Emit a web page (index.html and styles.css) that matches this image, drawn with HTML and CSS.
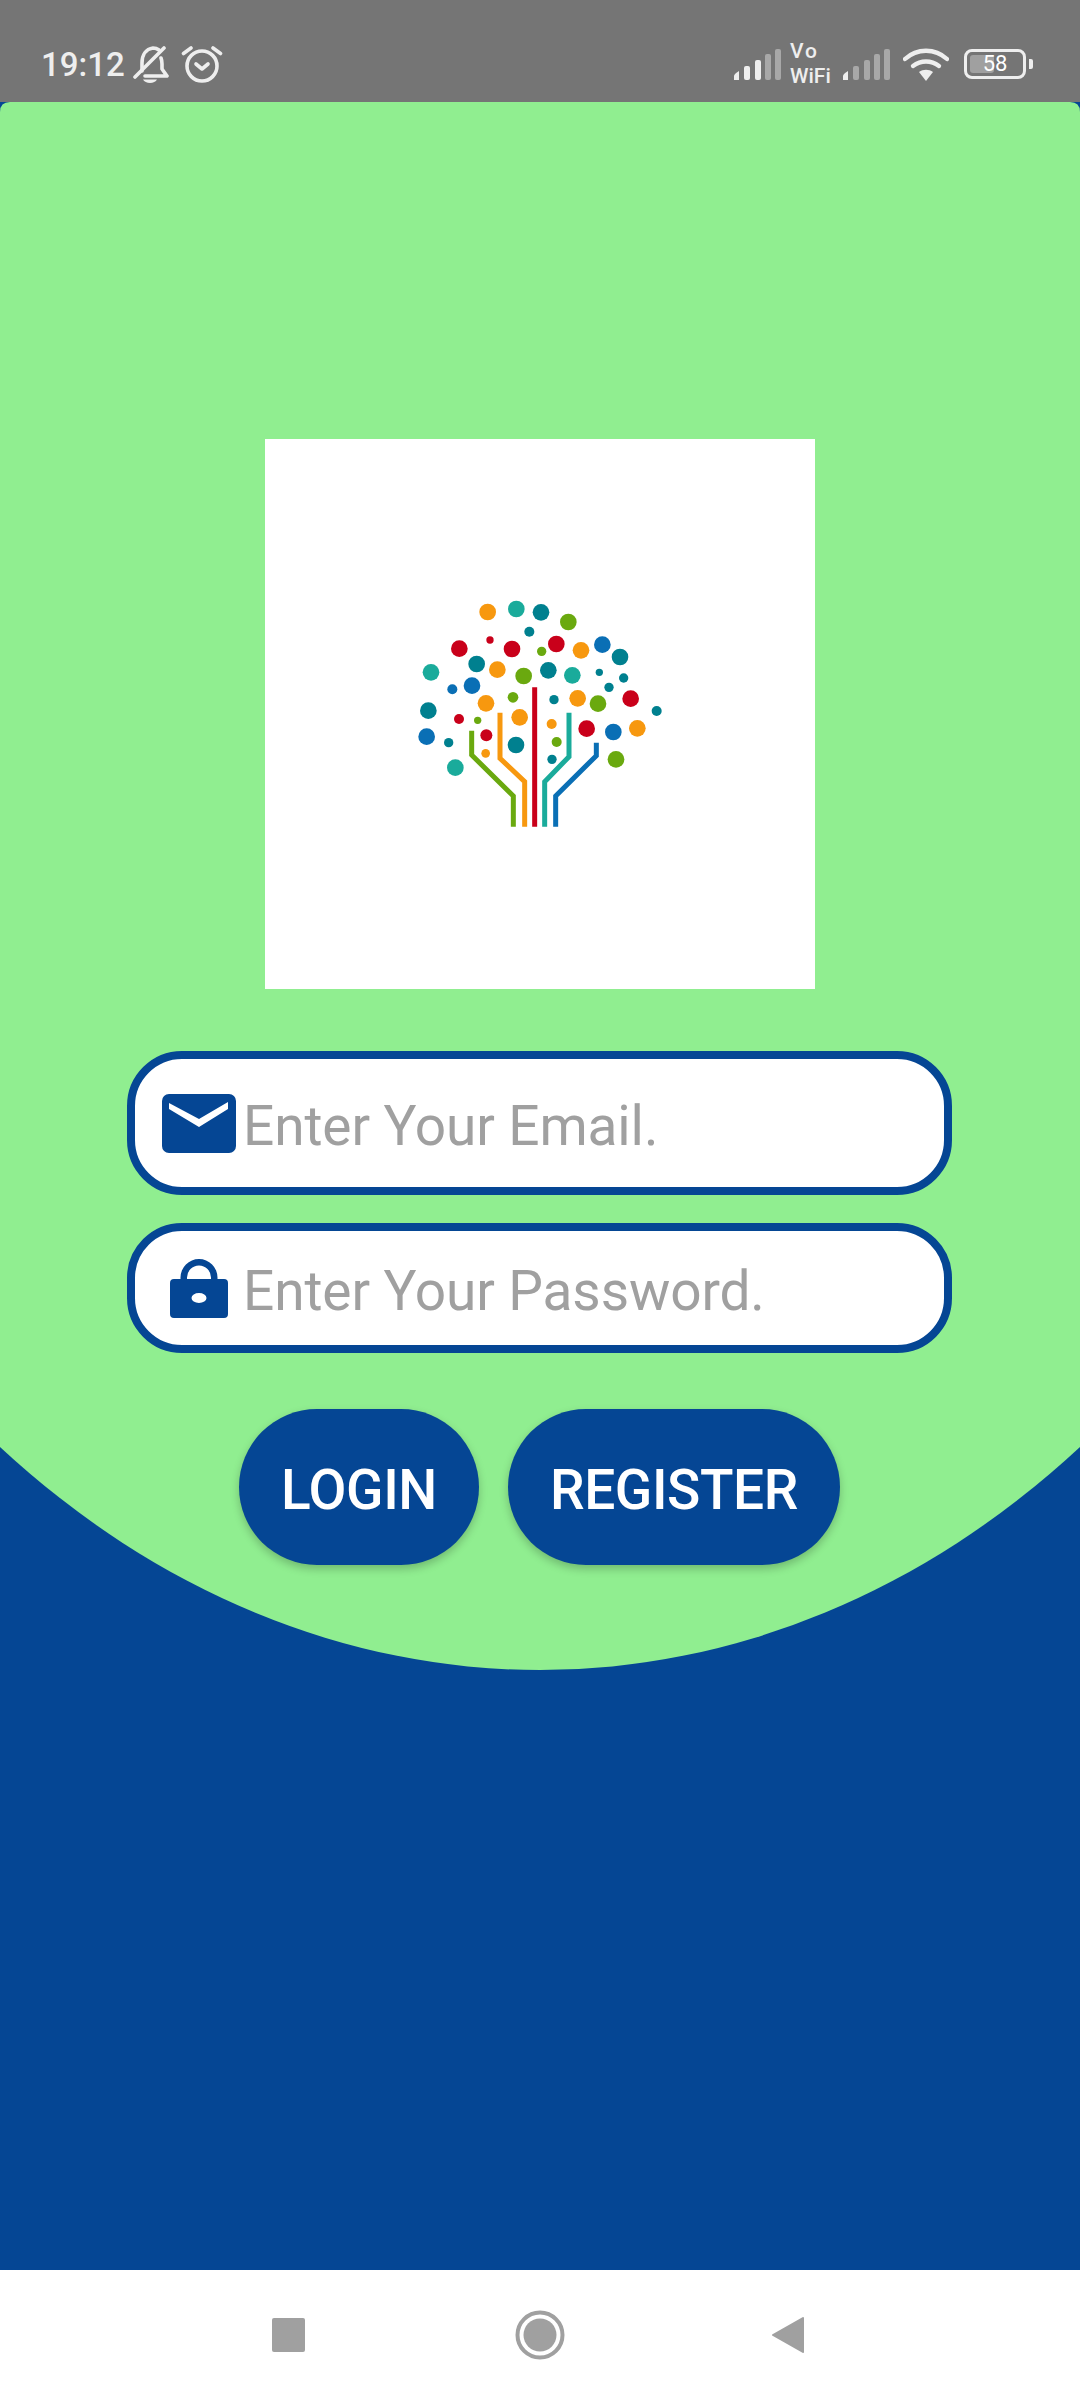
FILE: index.html
```html
<!DOCTYPE html>
<html lang="en">
<head>
<meta charset="utf-8">
<title>Login</title>
<link rel="stylesheet" href="styles.css">
</head>
<body>
<div class="screen">
  <header class="status">
    <div class="status-left">
      <span class="time">19:12</span>
      <svg class="ic-bell" viewBox="0 0 36 38"><g fill="none" stroke="#eee" stroke-width="3.6" stroke-linecap="round" stroke-linejoin="round"><path d="M2 31 31 2"/><path d="M9 25V17C9 9 13 3 20 2c2 0 4 .5 6 2"/><path d="M28 12c.8 2 1 4 1 6v5l5 7H12"/></g><path d="M10 33.500h14c-1 2-4 3.500-7 3.500s-6-1.500-7-3.500z" fill="#eee"/></svg>
      <svg class="ic-alarm" viewBox="0 0 42 38"><g fill="none" stroke="#eee" stroke-width="3.6" stroke-linecap="round" stroke-linejoin="round"><circle cx="21" cy="20" r="15"/><path d="m15 18 6 5 6-5"/><path d="M2.500 7.500 10 2"/><path d="m32 2 7.500 5.500"/></g></svg>
    </div>
    <div class="status-right">
      <svg class="ic-signal" viewBox="0 0 48 32"><g fill="#eee"><path d="M1 31v-4q0-2 5-5v9z"/><rect x="11" y="17" width="6" height="14" rx="2"/><rect x="22" y="11" width="6" height="20" rx="2"/></g><g fill="#a8a8a8"><rect x="32" y="5" width="6" height="26" rx="2"/><rect x="42" y="0" width="6" height="31" rx="2"/></g></svg>
      <span class="vowifi"><span class="vo">Vo</span><span>WiFi</span></span>
      <svg class="ic-signal two" viewBox="0 0 48 32"><path d="M1 31v-4q0-2 5-5v9z" fill="#eee"/><g fill="#a8a8a8"><rect x="11" y="17" width="6" height="14" rx="2"/><rect x="22" y="11" width="6" height="20" rx="2"/><rect x="32" y="5" width="6" height="26" rx="2"/><rect x="42" y="0" width="6" height="31" rx="2"/></g></svg>
      <svg class="ic-wifi" viewBox="0 0 46 34"><g fill="none" stroke="#eee" stroke-width="4.4" stroke-linecap="round"><path d="M2 12C14 1 32 1 44 12"/><path d="M10 19c8-6 18-6 26 0"/></g><path d="M16 25c4-3 10-3 14 0l-7 9z" fill="#eee"/></svg>
      <div class="battery">
        <div class="battery-body"><span class="battery-level"></span><span class="battery-num">58</span></div>
        <span class="battery-tip"></span>
      </div>
    </div>
  </header>

  <main class="main">
    <section class="panel">
      <div class="logo">
        <svg class="logo-art" viewBox="0 0 840 750">
          <g fill="none" stroke-width="15">
            <path stroke="#c9001a" d="M404 292V710"/>
            <path stroke="#6aa90f" d="M215 422V495L340 618V710"/>
            <path stroke="#f7980f" d="M300 368V505L374 575V710"/>
            <path stroke="#1aab9b" d="M507 368V500L434 575V710"/>
            <path stroke="#0a6fb5" d="M589 458V497L467 618V710"/>
          </g>
          <g fill="#f7980f">
            <circle cx="263" cy="66" r="25"/><circle cx="543" cy="181" r="25"/><circle cx="292" cy="239" r="25"/><circle cx="258" cy="340" r="25"/><circle cx="533" cy="325" r="25"/><circle cx="359" cy="382" r="25"/><circle cx="712" cy="415" r="25"/><circle cx="455" cy="402" r="15"/><circle cx="257" cy="490" r="13"/>
          </g>
          <g fill="#1aab9b">
            <circle cx="349" cy="57" r="25"/><circle cx="93" cy="247" r="25"/><circle cx="517" cy="256" r="25"/><circle cx="166" cy="533" r="25"/>
          </g>
          <g fill="#00808f">
            <circle cx="423" cy="67" r="25"/><circle cx="388" cy="125" r="15"/><circle cx="230" cy="222" r="25"/><circle cx="660" cy="201" r="25"/><circle cx="445" cy="241" r="25"/><circle cx="598" cy="247" r="11"/><circle cx="671" cy="264" r="14"/><circle cx="627" cy="292" r="14"/><circle cx="462" cy="329" r="14"/><circle cx="85" cy="362" r="25"/><circle cx="770" cy="363" r="15"/><circle cx="348" cy="465" r="25"/><circle cx="146" cy="458" r="14"/><circle cx="456" cy="508" r="14"/>
          </g>
          <g fill="#6aa90f">
            <circle cx="505" cy="96" r="25"/><circle cx="425" cy="184" r="14"/><circle cx="371" cy="258" r="25"/><circle cx="339" cy="322" r="16"/><circle cx="594" cy="341" r="25"/><circle cx="233" cy="391" r="11"/><circle cx="470" cy="456" r="15"/><circle cx="648" cy="508" r="25"/>
          </g>
          <g fill="#c9001a">
            <circle cx="270" cy="150" r="11"/><circle cx="178" cy="176" r="25"/><circle cx="336" cy="177" r="25"/><circle cx="469" cy="162" r="25"/><circle cx="692" cy="326" r="25"/><circle cx="177" cy="387" r="15"/><circle cx="259" cy="436" r="18"/><circle cx="560" cy="416" r="25"/>
          </g>
          <g fill="#0a6fb5">
            <circle cx="607" cy="164" r="25"/><circle cx="216" cy="287" r="25"/><circle cx="157" cy="298" r="15"/><circle cx="80" cy="440" r="25"/><circle cx="640" cy="426" r="25"/>
          </g>
        </svg>
      </div>

      <form class="form">
        <div class="field field-email">
          <span class="field-icon">
            <svg class="ic-mail" viewBox="0 0 74 59"><path fill="#054694" fill-rule="evenodd" d="M7 0H67a7 7 0 0 1 7 7V52a7 7 0 0 1-7 7H7a7 7 0 0 1-7-7V7a7 7 0 0 1 7-7zM7 9V15L37 33 66 15V8L37 25z"/></svg>
          </span>
          <span class="placeholder">Enter Your Email.</span>
        </div>
        <div class="field field-password">
          <span class="field-icon">
            <svg class="ic-lock" viewBox="0 0 58 59"><path fill="#054694" fill-rule="evenodd" d="M10.500 20V18.500a18.500 18.500 0 0 1 37 0V20H54a4 4 0 0 1 4 4V55a4 4 0 0 1-4 4H4a4 4 0 0 1-4-4V24a4 4 0 0 1 4-4zM17 20H41V18.500a12 12 0 0 0-24 0zM21.500 39a7.500 5 0 1 0 15 0a7.500 5 0 1 0-15 0z"/></svg>
          </span>
          <span class="placeholder">Enter Your Password.</span>
        </div>
        <div class="actions">
          <button class="btn" type="button">LOGIN</button>
          <button class="btn" type="button">REGISTER</button>
        </div>
      </form>
    </section>
  </main>

  <nav class="nav">
    <span class="nav-square"></span>
    <svg class="nav-home" viewBox="0 0 50 50"><circle cx="25" cy="25" r="22.500" fill="none" stroke="#a0a0a0" stroke-width="4"/><circle cx="25" cy="25" r="16.500" fill="#a0a0a0"/></svg>
    <svg class="nav-back" viewBox="0 0 34 38"><path d="M32 2 2 19 32 36z" fill="#a0a0a0" stroke="#a0a0a0" stroke-width="2" stroke-linejoin="round"/></svg>
  </nav>
</div>
</body>
</html>
```
FILE: styles.css
```css
* { box-sizing: border-box; }
html, body { margin: 0; padding: 0; }
body { font-family: Roboto, "Noto Sans", sans-serif; }

.screen {
  width: 1080px;
  height: 2400px;
  display: flex;
  flex-direction: column;
  background: #054694;
  overflow: hidden;
}

/* status bar */
.status {
  height: 102px;
  flex: none;
  background: #757575;
  color: #eee;
  display: flex;
  justify-content: space-between;
  align-items: flex-start;
  padding: 46px 47px 0 41px;
}
.status-left, .status-right { display: flex; align-items: flex-start; }
.time { font-size: 33px; font-weight: 500; line-height: 37px; width: 92px; }
.ic-bell { width: 36px; height: 38px; }
.ic-alarm { width: 42px; height: 38px; margin-left: 12px; }
.ic-signal { width: 48px; height: 32px; margin-top: 3px; }
.ic-signal.two { margin-left: 10px; }
.vowifi {
  display: flex;
  flex-direction: column;
  margin: -7px 0 0 9px;
  width: 42px;
  font-size: 21px;
  line-height: 25px;
  font-weight: 500;
}
.vo { letter-spacing: 2px; }
.ic-wifi { width: 46px; height: 34px; margin-left: 13px; margin-top: 1px; }
.battery { display: flex; align-items: center; margin-left: 15px; margin-top: 3px; }
.battery-body {
  position: relative;
  width: 62px;
  height: 30px;
  border: 3px solid #eee;
  border-radius: 8px;
  display: flex;
  align-items: center;
  justify-content: center;
}
.battery-level {
  position: absolute;
  left: 3px; top: 3px; bottom: 3px;
  width: 24px;
  background: #a0a0a0;
  border-radius: 3px;
}
.battery-num { position: relative; font-size: 22px; line-height: 24px; color: #fff; }
.battery-tip { width: 4px; height: 10px; margin-left: 3px; background: #eee; border-radius: 0 2px 2px 0; }

/* main */
.main { flex: 1; background: #054694; }
.panel {
  height: 1568px;
  background: #90ee90;
  padding-top: 337px;
  clip-path: path("M10 0H1070Q1080 0 1080 10V1345A900 1115 0 0 1 0 1345V10Q0 0 10 0Z");
}
.logo {
  width: 550px;
  height: 550px;
  margin: 0 auto;
  background: #fff;
  display: flex;
  justify-content: center;
  padding-top: 151px;
}
.logo-art { width: 280px; height: 250px; }

.form { width: 825px; margin: 62px 0 0 127px; display: flex; flex-direction: column; }
.field {
  display: flex;
  align-items: center;
  background: #fff;
  border: 8px solid #054694;
  border-radius: 55px;
  padding-left: 27px;
}
.field-email { height: 144px; }
.field-password { height: 130px; margin-top: 28px; }
.field-icon { width: 74px; display: flex; justify-content: center; align-items: center; }
.ic-mail { width: 74px; height: 59px; }
.ic-lock { width: 58px; height: 59px; }
.placeholder {
  margin-left: 7px;
  padding-top: 6px;
  font-size: 55px;
  line-height: 64px;
  letter-spacing: -.1px;
  color: #a0a0a0;
}

.actions { display: flex; justify-content: center; gap: 29px; margin-top: 56px; }
.btn {
  height: 156px;
  padding: 5px 42px 0;
  border: 0;
  border-radius: 78px;
  background: #054694;
  color: #fff;
  font-family: Roboto, sans-serif;
  font-size: 55px;
  font-weight: 500;
  letter-spacing: -.4px;
  box-shadow: 0 4px 8px rgba(0, 0, 0, .22);
}

/* nav */
.nav {
  position: relative;
  height: 130px;
  flex: none;
  background: #fff;
}
.nav-square { position: absolute; left: 272px; top: 48px; width: 33px; height: 34px; background: #a0a0a0; border-radius: 2px; }
.nav-home { position: absolute; left: 515px; top: 40px; width: 50px; height: 50px; }
.nav-back { position: absolute; left: 771px; top: 46px; width: 34px; height: 38px; }
```
